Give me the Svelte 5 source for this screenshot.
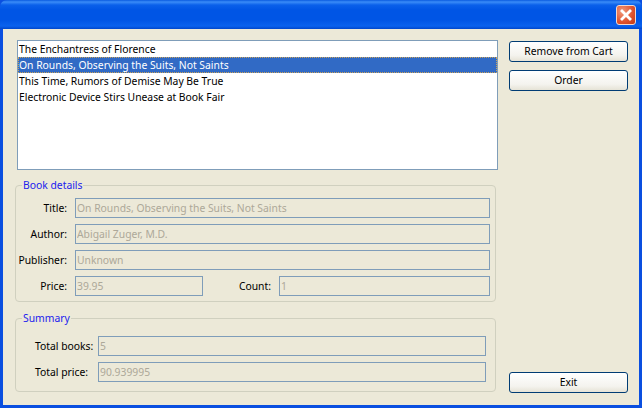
<script>
	let books = [
		'The Enchantress of Florence',
		'On Rounds, Observing the Suits, Not Saints',
		'This Time, Rumors of Demise May Be True',
		'Electronic Device Stirs Unease at Book Fair'
	];
	let selected = 1;
</script>

<div class="window">
	<header class="titlebar">
		<button class="close" aria-label="Close">
			<svg width="12" height="12" viewBox="0 0 12 12">
				<path d="M2 2 L10 10 M10 2 L2 10" stroke="#fff" stroke-width="2.8" stroke-linecap="square" fill="none" />
			</svg>
		</button>
	</header>

	<div class="client">
		<div class="main">
			<ul class="list">
				{#each books as book, i}
					<li class:selected={i === selected}>{book}</li>
				{/each}
			</ul>

			<fieldset class="details">
				<legend>Book details</legend>
				<div class="row">
					<label for="title">Title:</label>
					<input id="title" disabled value={books[selected]} />
				</div>
				<div class="row">
					<label for="author">Author:</label>
					<input id="author" disabled value="Abigail Zuger, M.D." />
				</div>
				<div class="row">
					<label for="publisher">Publisher:</label>
					<input id="publisher" disabled value="Unknown" />
				</div>
				<div class="row">
					<label for="price">Price:</label>
					<input id="price" class="price" disabled value="39.95" />
					<label for="count" class="count-label">Count:</label>
					<input id="count" disabled value="1" />
				</div>
			</fieldset>

			<fieldset class="summary">
				<legend>Summary</legend>
				<div class="row">
					<label for="books">Total books:</label>
					<input id="books" disabled value="5" />
				</div>
				<div class="row">
					<label for="total">Total price:</label>
					<input id="total" disabled value="90.939995" />
				</div>
			</fieldset>
		</div>

		<div class="actions">
			<button class="btn">Remove from Cart</button>
			<button class="btn">Order</button>
			<button class="btn exit">Exit</button>
		</div>
	</div>
</div>

<style>
	:global(body) {
		margin: 0;
		background: #0055e5;
	}

	.window {
		width: 642px;
		height: 408px;
		display: flex;
		flex-direction: column;
		box-sizing: border-box;
		overflow: hidden;
		font-family: "Noto Sans", sans-serif;
		font-size: 10.35px;
		color: #000;
		background: #0a4fe0;
	}

	.titlebar {
		height: 29px;
		flex: none;
		display: flex;
		justify-content: flex-end;
		align-items: flex-start;
		padding: 5px 6px 0 0;
		box-sizing: border-box;
		border-radius: 7px 7px 0 0;
		background: linear-gradient(to bottom, #0a5be0 0, #3a8cf8 2px, #0a60ea 5px, #0055e5 10px, #0055e5 20px, #0a62ee 26px, #0047cc 29px);
	}

	.close {
		width: 20px;
		height: 20px;
		padding: 0;
		display: flex;
		align-items: center;
		justify-content: center;
		border: 1px solid #f4d8cc;
		border-radius: 3px;
		background: radial-gradient(circle at 30% 30%, #f09a7c, #e0512c 60%, #c13a14);
	}

	.client {
		flex: 1;
		margin: 0 3px 3px;
		padding: 11px 10px 12px 12px;
		display: flex;
		gap: 11px;
		background: #ece9d8;
	}

	.main {
		width: 483px;
		display: flex;
		flex-direction: column;
	}

	.list {
		list-style: none;
		margin: 0 0 0 2px;
		padding: 0;
		width: 481px;
		height: 130px;
		box-sizing: border-box;
		border: 1px solid #7f9db9;
		background: #fff;
	}

	.list li {
		height: 16px;
		line-height: 16px;
		padding-left: 1px;
		white-space: nowrap;
	}

	.list li.selected {
		background: #316ac5;
		color: #fff;
		outline: 1px dotted #c9a25a;
		outline-offset: -1px;
	}

	fieldset {
		margin: 9px 0 0;
		padding: 0 5px 0 0;
		width: 481px;
		box-sizing: border-box;
		border: 1px solid #d0d0bf;
		border-radius: 4px;
		display: flex;
		flex-direction: column;
		gap: 6px;
	}

	legend {
		margin-left: 6px;
		padding: 0 1px;
		color: #2222ee;
		line-height: 12px;
	}

	.details {
		height: 123px;
		padding-top: 7px;
	}

	.summary {
		margin-top: 10px;
		height: 80px;
		padding-top: 12px;
		padding-right: 9px;
	}

	.row {
		display: flex;
		align-items: center;
		height: 20px;
	}

	label {
		flex: none;
		text-align: right;
		width: 51px;
		margin-right: 8px;
		white-space: nowrap;
	}

	.summary label {
		width: 58px;
		margin-left: 19px;
		margin-right: 5px;
		text-align: left;
	}

	input {
		flex: 1;
		min-width: 0;
		height: 20px;
		box-sizing: border-box;
		margin: 0;
		padding: 0 1px;
		border: 1px solid #7f9db9;
		background: #ece9d8;
		color: #aca899;
		font: inherit;
	}

	.price {
		flex: none;
		width: 128px;
	}

	.count-label {
		width: 68px;
		margin-right: 8px;
	}

	.actions {
		width: 119px;
		margin-top: 1px;
		display: flex;
		flex-direction: column;
		gap: 8px;
	}

	.btn {
		height: 21px;
		padding: 0 0 1px;
		border: 1px solid #003c74;
		border-radius: 3px;
		background: linear-gradient(to bottom, #fff, #f4f3ee 70%, #e6e3d6);
		font: inherit;
		color: #000;
	}

	.exit {
		margin-top: auto;
	}
</style>
